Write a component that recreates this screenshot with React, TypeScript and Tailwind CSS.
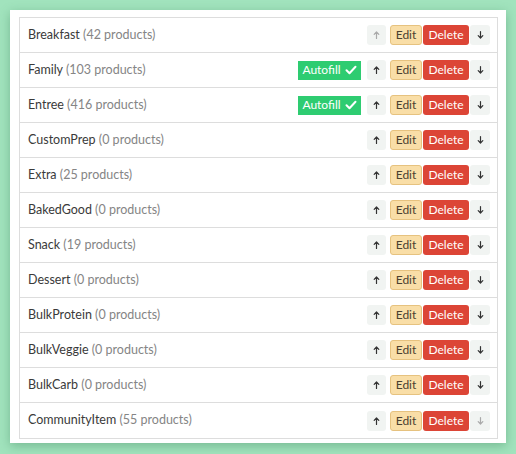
import React from "react";

type Category = { name: string; count: number; autofill?: boolean };

const categories: Category[] = [
  { name: "Breakfast", count: 42 },
  { name: "Family", count: 103, autofill: true },
  { name: "Entree", count: 416, autofill: true },
  { name: "CustomPrep", count: 0 },
  { name: "Extra", count: 25 },
  { name: "BakedGood", count: 0 },
  { name: "Snack", count: 19 },
  { name: "Dessert", count: 0 },
  { name: "BulkProtein", count: 0 },
  { name: "BulkVeggie", count: 0 },
  { name: "BulkCarb", count: 0 },
  { name: "CommunityItem", count: 55 },
];

function ArrowUp() {
  return (
    <svg width="7" height="8" viewBox="0 0 7 8" fill="none" stroke="currentColor" strokeWidth="1.2" strokeLinecap="round" strokeLinejoin="round">
      <path d="M3.5 7.4V1M1.2 3.3L3.5 1l2.3 2.3" />
    </svg>
  );
}

function ArrowDown() {
  return (
    <svg width="7" height="8" viewBox="0 0 7 8" fill="none" stroke="currentColor" strokeWidth="1.2" strokeLinecap="round" strokeLinejoin="round">
      <path d="M3.5 0.6V7M1.2 4.7L3.5 7l2.3-2.3" />
    </svg>
  );
}

function Check() {
  return (
    <svg width="12" height="10" viewBox="0 0 12 10" fill="none" stroke="currentColor" strokeWidth="2" strokeLinecap="round" strokeLinejoin="round">
      <path d="M1.5 5.2l3 3L10.5 1.8" />
    </svg>
  );
}

function Row({ c, first, last }: { c: Category; first: boolean; last: boolean }) {
  return (
    <div className={`flex h-[35px] items-center pl-[8px] pr-[7px] ${last ? "" : "border-b border-[#dddddd]"}`}>
      <div className="flex-1 text-[12.5px] text-[#3a3a3a]">
        {c.name} <span className="text-[#858585]">({c.count} products)</span>
      </div>
      {c.autofill && (
        <div className="mr-[6px] flex h-[19px] w-[63px] items-center justify-center gap-[4px] bg-[#2ecc71] text-[12px] text-white">
          Autofill
          <Check />
        </div>
      )}
      <div className="flex items-center">
        <button className={`flex h-[20px] w-[19px] items-center justify-center rounded-[3px] bg-[#f1f4f2] ${first ? "text-[#a9a9a9]" : "text-[#333333]"}`}>
          <ArrowUp />
        </button>
        <button className="ml-[4px] flex h-[20px] w-[32px] items-center justify-center rounded-[3px] border border-[#e6c27f] bg-[#f9dea7] text-[12px] text-[#4a4030]">
          Edit
        </button>
        <button className="ml-[1px] flex h-[20px] w-[46px] items-center justify-center rounded-[3px] bg-[#dc4536] text-[12px] text-white">
          Delete
        </button>
        <button className={`ml-[1px] flex h-[20px] w-[20px] items-center justify-center rounded-[3px] bg-[#f1f4f2] ${last ? "text-[#a9a9a9]" : "text-[#333333]"}`}>
          <ArrowDown />
        </button>
      </div>
    </div>
  );
}

export default function App() {
  return (
    <div
      className="h-[454px] w-[516px] bg-[#a1e3bd] p-[10px] pb-[11px]"
      style={{ fontFamily: "Lato, 'Noto Sans', sans-serif" }}
    >
      <div className="h-full bg-white pb-[6px] pl-[9px] pr-[8px] pt-[7px] shadow-[0_3px_10px_rgba(40,110,70,0.35)]">
        <div className="border border-[#dddddd]">
          {categories.map((c, i) => (
            <Row key={c.name} c={c} first={i === 0} last={i === categories.length - 1} />
          ))}
        </div>
      </div>
    </div>
  );
}
